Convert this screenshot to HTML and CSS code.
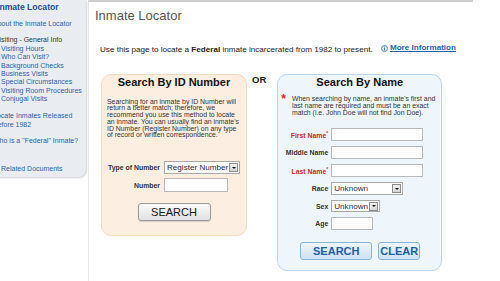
FILE: index.html
```html
<!DOCTYPE html>
<html lang="en">
	<head>
		<meta charset="UTF-8" />
		<title>Inmate Locator</title>
		<link rel="stylesheet" href="styles.css">
	</head>
	<body>
		<div class="page">
			<nav class="sidebar">
				<a class="side-title" href="#">Inmate Locator</a>
				<a class="side-link" href="#">About the Inmate Locator</a>
				<div class="side-group">
					<span class="side-head">Visiting - General Info</span>
					<a class="side-sub" href="#">Visiting Hours</a>
					<a class="side-sub" href="#">Who Can Visit?</a>
					<a class="side-sub" href="#">Background Checks</a>
					<a class="side-sub" href="#">Business Visits</a>
					<a class="side-sub" href="#">Special Circumstances</a>
					<a class="side-sub" href="#">Visiting Room Procedures</a>
					<a class="side-sub" href="#">Conjugal Visits</a>
				</div>
				<a class="side-link side-gap" href="#">Locate Inmates Released<br>Before 1982</a>
				<a class="side-link side-gap" href="#">Who is a "Federal" Inmate?</a>
				<a class="side-sub side-docs" href="#">Related Documents</a>
			</nav>

			<main class="main">
				<h1 class="title">Inmate Locator</h1>
				<p class="intro">
					Use this page to locate a <b>Federal</b> inmate incarcerated from 1982 to present.
					<a class="more" href="#">
						<svg width="7" height="7" viewBox="0 0 14 14">
							<circle cx="7" cy="7" r="6" fill="none" stroke="#2a62b0" stroke-width="1.6" />
							<rect x="6.1" y="6" width="1.8" height="5" fill="#2a62b0" />
							<rect x="6.1" y="3" width="1.8" height="1.8" fill="#2a62b0" />
						</svg>
						<span>More Information</span>
					</a>
				</p>

				<div class="searches">
					<form class="box box-id">
						<h2>Search By ID Number</h2>
						<p class="desc">Searching for an inmate by ID Number will return a better match; therefore, we recommend you use this method to locate an inmate. You can usually find an inmate's ID Number (Register Number) on any type of record or written correspondence.</p>
						<div class="fields fields-id">
							<label for="idtype">Type of Number</label>
							<div class="select sel-type">
								<select id="idtype"><option>Register Number</option></select>
								<span class="arrow"></span>
							</div>
							<label for="idnum">Number</label>
							<input class="inp inp-num" type="text" id="idnum" />
						</div>
						<div class="actions actions-id">
							<button type="button" class="btn btn-gray">SEARCH</button>
						</div>
					</form>

					<div class="or">OR</div>

					<form class="box box-name">
						<h2>Search By Name</h2>
						<div class="note">
							<span class="star">*</span>
							<p>When searching by name, an inmate's first and last name are required and must be an exact match (i.e. John Doe will not find Jon Doe).</p>
						</div>
						<div class="fields fields-name">
							<label class="req" for="fname">First Name<sup>*</sup></label>
							<input class="inp" type="text" id="fname" />
							<label for="mname">Middle Name</label>
							<input class="inp" type="text" id="mname" />
							<label class="req" for="lname">Last Name<sup>*</sup></label>
							<input class="inp" type="text" id="lname" />
							<label for="race">Race</label>
							<div class="select sel-race">
								<select id="race"><option>Unknown</option></select>
								<span class="arrow"></span>
							</div>
							<label for="sex">Sex</label>
							<div class="select sel-sex">
								<select id="sex"><option>Unknown</option></select>
								<span class="arrow"></span>
							</div>
							<label for="age">Age</label>
							<input class="inp inp-age" type="text" id="age" />
						</div>
						<div class="actions actions-name">
							<button type="button" class="btn btn-blue btn-search">SEARCH</button>
							<button type="button" class="btn btn-blue btn-clear">CLEAR</button>
						</div>
					</form>
				</div>
			</main>
		</div>
	</body>
</html>
```

FILE: styles.css
```css
* {
	margin: 0;
	padding: 0;
	box-sizing: border-box;
}

body {
	background-color: #fff;
	font-family: "Liberation Sans", Arial, sans-serif;
	color: #333;
	overflow: hidden;
}

a {
	text-decoration: none;
}

.page {
	display: flex;
	align-items: flex-start;
	margin-left: -9px;
}

/* left navigation */
.sidebar {
	width: 95px;
	height: 177px;
	flex-shrink: 0;
	display: flex;
	flex-direction: column;
	align-items: flex-start;
	padding: 2px 0 0 2px;
	background-color: #e9edf2;
	border-bottom-right-radius: 8px;
	box-shadow: 1px 1px 2px rgba(0, 0, 0, 0.18);
	font-size: 7px;
	line-height: 8.4px;
	white-space: nowrap;
}
.side-title {
	margin-left: 4px;
	font-size: 8.6px;
	line-height: 10px;
	font-weight: bold;
	color: #1c4e92;
}
.side-link {
	margin-top: 8px;
	color: #2b5fae;
}
.side-group {
	display: flex;
	flex-direction: column;
	margin-top: 8px;
}
.side-head {
	margin-left: 2px;
	color: #333;
}
.side-sub {
	margin-left: 8px;
	color: #2b5fae;
}
.side-gap {
	margin-top: 8.5px;
}
.side-docs {
	margin-top: 19px;
}

/* main column */
.main {
	width: 385px;
	margin-left: 2px;
	padding: 6px 0 0 6px;
	border-top: 2px solid #cfcfcf;
	border-left: 1px solid #e6e6e6;
	height: 281px;
}
.title {
	font-size: 13px;
	line-height: 16px;
	font-weight: normal;
	color: #555;
}
.intro {
	margin: 19px 0 0 5px;
	font-size: 8.1px;
	line-height: 10px;
	color: #222;
}
.more {
	margin-left: 6px;
	display: inline-flex;
	align-items: center;
	gap: 2px;
	font-weight: bold;
	color: #2a62b0;
}
.more span {
	text-decoration: underline;
}

.searches {
	display: flex;
	align-items: flex-start;
	margin: 19px 0 0 6px;
}

.box {
	border-radius: 10px;
	border: 1px solid;
}
.box h2 {
	font-size: 11px;
	line-height: 13px;
	text-align: center;
	color: #111;
}

.box-id {
	width: 146px;
	height: 162px;
	padding: 1px 5px 0 5px;
	background-color: #fcefe2;
	border-color: #f1dcc1;
}
.desc {
	margin-top: 10px;
	font-size: 6.9px;
	line-height: 6.8px;
	color: #333;
}

.or {
	margin: 0 11px 0 5px;
	font-size: 9.5px;
	font-weight: bold;
	color: #222;
}

.box-name {
	width: 165px;
	height: 197px;
	padding: 1px 0 0 0;
	background-color: #eef6fc;
	border-color: #b9d6ec;
}
.note {
	display: flex;
	gap: 6px;
	margin-top: 6px;
}
.star {
	margin-left: 3px;
	font-size: 12px;
	line-height: 9px;
	font-weight: bold;
	color: #d22a2a;
}
.note p {
	width: 145px;
	font-size: 6.9px;
	line-height: 7.3px;
	color: #333;
}

/* field grids */
.fields {
	display: grid;
	align-items: center;
}
.fields label {
	text-align: right;
	font-size: 6.9px;
	font-weight: bold;
	color: #333;
}
.fields label.req {
	color: #c92b2b;
}
.fields sup {
	font-size: 5px;
}
.fields-id {
	grid-template-columns: 53px auto;
	column-gap: 4px;
	row-gap: 4px;
	margin-top: 22px;
}
.fields-name {
	grid-template-columns: 50px auto;
	column-gap: 3px;
	row-gap: 5px;
	margin-top: 12px;
}

.inp {
	width: 92px;
	height: 13px;
	border: 1px solid #b9b9b9;
	background-color: #fff;
}
.inp-num {
	width: 64px;
	height: 14px;
}
.inp-age {
	width: 42px;
}

.select {
	display: flex;
	align-items: center;
	height: 13px;
	border: 1px solid #a9a9a9;
	background-color: #fff;
	padding-right: 1px;
}
.select select {
	appearance: none;
	flex: 1;
	min-width: 0;
	border: none;
	background: transparent;
	font-family: inherit;
	font-size: 8.1px;
	color: #1e2a50;
	padding-left: 2px;
	outline: none;
}
.arrow {
	position: relative;
	flex-shrink: 0;
	width: 9px;
	height: 9px;
	border: 1px solid #8c8c8c;
	background: linear-gradient(#f4f4f4, #d6d6d6);
}
.arrow::after {
	content: "";
	position: absolute;
	left: 1.5px;
	top: 2.5px;
	border-left: 2.5px solid transparent;
	border-right: 2.5px solid transparent;
	border-top: 2.5px solid #111;
}
.sel-type {
	width: 76px;
}
.sel-race {
	width: 72px;
}
.sel-sex {
	width: 49px;
	height: 12px;
}

/* buttons */
.actions {
	display: flex;
}
.actions-id {
	justify-content: center;
	margin-top: 11px;
}
.actions-name {
	gap: 6px;
	margin: 12px 0 0 22px;
}
.btn {
	height: 18px;
	border-radius: 3px;
	font-family: inherit;
	font-size: 11px;
	cursor: pointer;
}
.btn-gray {
	width: 73px;
	color: #111;
	border: 1px solid #9a9a9a;
	background: linear-gradient(#fafafa, #e2e2e2);
	box-shadow: 0 1px 1px rgba(0, 0, 0, 0.15);
}
.btn-blue {
	color: #1d5ea8;
	font-weight: bold;
	border: 1px solid #86b1d8;
	background: linear-gradient(#eef5fc, #cfe1f2);
}
.btn-search {
	width: 72px;
}
.btn-clear {
	width: 42px;
}
```
